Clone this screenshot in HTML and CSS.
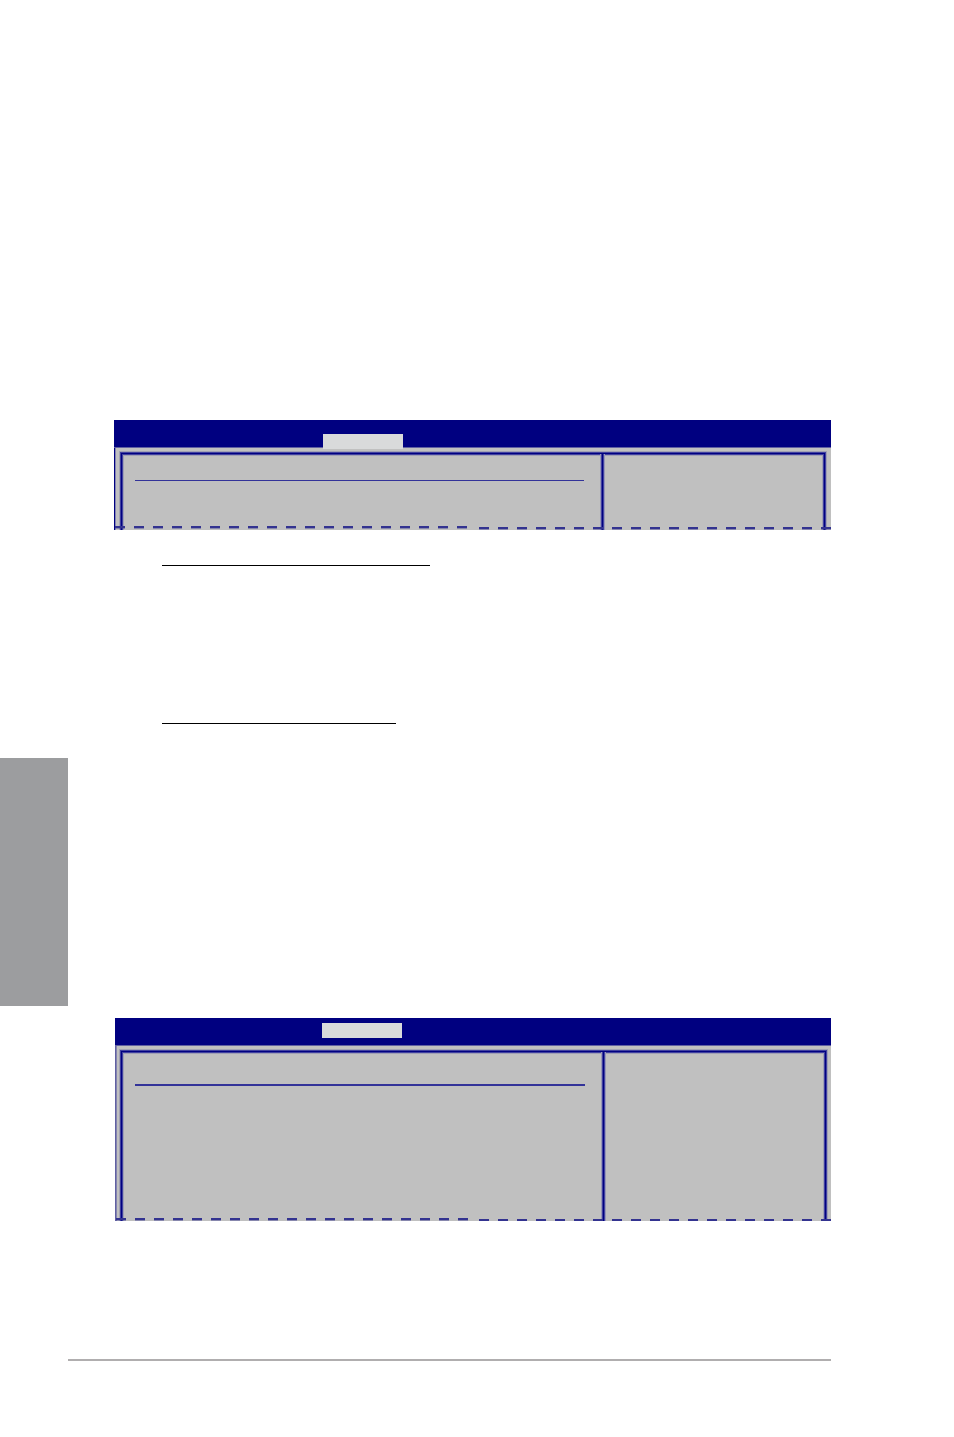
FILE: index.html
```
<!DOCTYPE html>
<html lang="en">
<head>
  <meta charset="UTF-8">
  <title>BIOS setup</title>
  <link rel="stylesheet" href="styles.css">
</head>
<body>
<div class="page">
  <!-- Chapter marker on the outer margin -->
  <aside class="margin">
    <div class="chapter-tab"></div>
  </aside>

  <main class="content">
    <section class="screen">
      <div class="menu-bar">
        <div class="menu-tab menu-tab-low"></div>
      </div>
      <div class="frame">
        <div class="items">
          <div class="item-rule"></div>
        </div>
        <div class="help"></div>
      </div>
      <div class="cut"></div>
    </section>

    <div class="underline underline-long"></div>
    <div class="underline underline-short"></div>

    <section class="screen screen-tall">
      <div class="menu-bar">
        <div class="menu-tab"></div>
      </div>
      <div class="frame">
        <div class="items">
          <div class="item-rule"></div>
        </div>
        <div class="help"></div>
      </div>
      <div class="cut"></div>
    </section>

    <hr class="footer-rule">
  </main>
</div>
</body>
</html>
```

FILE: styles.css
```
body {
  margin: 0;
  background: #fff;
  font-family: "Liberation Sans", Arial, sans-serif;
}
.page {
  display: flex;
}
.margin {
  flex: 0 0 68px;
  padding-top: 758px;
}
.chapter-tab {
  height: 248px;
  background: #9c9d9f;
}
.content {
  flex: 1;
  padding: 420px 123px 76px 0;
}

/* BIOS screens */
.screen {
  position: relative;
  overflow: hidden;
  height: 110px;
  margin-left: 46px;
  background: #c0c0c0;
  box-shadow: inset 1px 0 #000080, inset 2px 0 #8484b0;
}
.menu-bar {
  position: relative;
  z-index: 1;
  display: flex;
  align-items: flex-start;
  height: 27px;
  padding-left: 209px;
  background: #000080;
  border-bottom: 1px solid #6060a2;
}
.menu-tab {
  width: 80px;
  height: 15px;
  margin-top: 5px;
  background: #d9dadb;
}
.menu-tab-low {
  margin-top: 14px;
}
.frame {
  display: flex;
  height: 80px;
  margin: 5px 6px 0 7px;
  border: 1px solid #000080;
  box-shadow: 0 0 0 1px #4040a0, 0 0 0 2px #a0a0b4,
    inset 0 0 0 1px #4040a0, inset 0 0 0 2px #a0a0b4;
}
.items {
  flex: 1;
  padding: 26px 18px 0 13px;
}
.item-rule {
  height: 1px;
  background: #333399;
}
.help {
  flex: 0 0 221px;
  border-left: 1px solid #000080;
  box-shadow: -1px 0 #4040a0, -2px 0 #9898b8,
    inset 1px 0 #4040a0, inset 2px 0 #9898b8;
}

/* dashed cut line, counted from both ends */
.cut {
  position: absolute;
  z-index: 1;
  left: 1px;
  right: 0;
  bottom: 1px;
  display: flex;
  filter: drop-shadow(0 1px rgba(51, 51, 144, 0.4));
}
.cut::before,
.cut::after {
  content: "";
  flex: 1;
  height: 2px;
  background: repeating-linear-gradient(to right, #333390 0 10px, transparent 10px 19px);
}
.cut::before {
  margin-bottom: 1px;
}
.cut::after {
  margin-top: 1px;
  background: repeating-linear-gradient(to left, #333390 0 10px, transparent 10px 19px);
}

.screen-tall {
  height: 203px;
  margin-top: 294px;
  margin-left: 47px;
  box-shadow: inset 1px 0 #6060a2, inset 2px 0 #8484b0;
}
.screen-tall .menu-bar {
  padding-left: 207px;
}
.screen-tall .frame {
  height: 173px;
  margin-right: 5px;
  margin-left: 6px;
}
.screen-tall .items {
  padding-top: 32px;
}
.screen-tall .item-rule {
  height: 2px;
}
.screen-tall .cut {
  bottom: 0;
}

/* subheading underlines */
.underline {
  height: 1px;
  margin-left: 94px;
  background: #000;
}
.underline-long {
  width: 268px;
  margin-top: 35px;
}
.underline-short {
  width: 234px;
  margin-top: 157px;
}

.footer-rule {
  height: 2px;
  margin: 138px 0 0;
  border: 0;
  background: #b0aeaf;
}
```
